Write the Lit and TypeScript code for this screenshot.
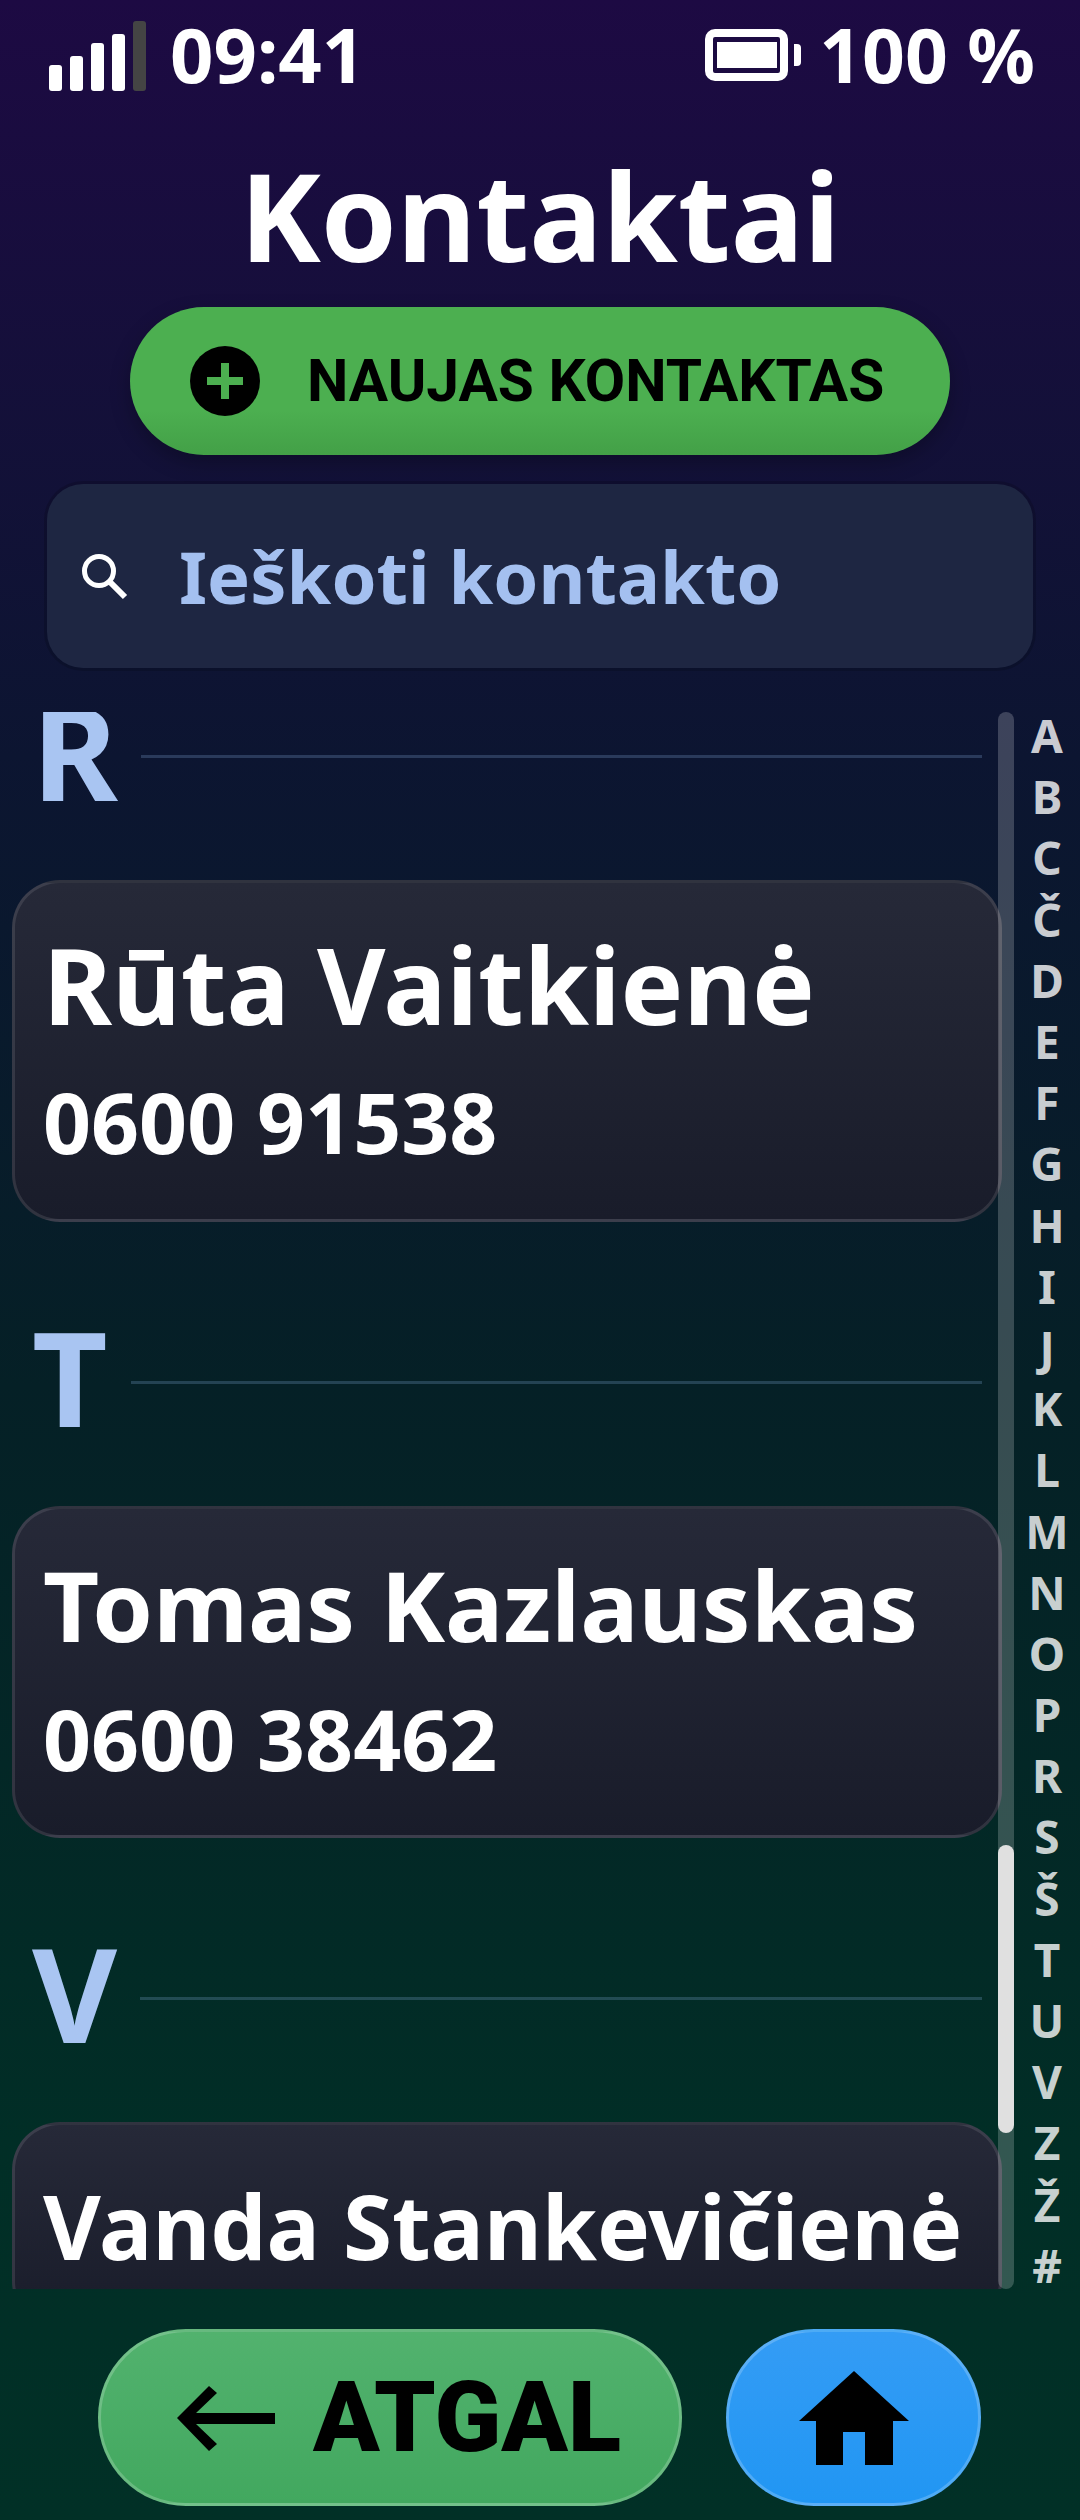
import { LitElement, html, css, svg, nothing } from 'lit';
import { customElement } from 'lit/decorators.js';

// name size differs per card, the reference is not uniform here.
// The last card runs under the nav, its phone line is never seen.
const SECTIONS = [
  { letter: 'R', name: 'Rūta Vaitkienė', phone: '0600 91538', size: 'lg' },
  { letter: 'T', name: 'Tomas Kazlauskas', phone: '0600 38462', size: 'md' },
  { letter: 'V', name: 'Vanda Stankevičienė', phone: '', size: 'sm' },
];

const INDEX = 'A B C Č D E F G H I J K L M N O P R S Š T U V Z Ž #'.split(' ');

const BARS = [
  { x: 0, h: 26 },
  { x: 21, h: 35 },
  { x: 42, h: 48 },
  { x: 63, h: 57 },
];

@customElement('app-root')
export class AppRoot extends LitElement {
  static styles = css`
    :host {
      display: block;
      width: 1080px;
      height: 2520px;
      font-family: "Noto Sans", sans-serif;
      color: #fff;
    }

    .screen {
      height: 2520px;
      display: flex;
      flex-direction: column;
      background: linear-gradient(180deg, #1d0a43 0%, #0c1531 30%, #052026 55%, #012e26 85%, #013026 100%);
    }

    .status {
      display: flex;
      justify-content: space-between;
      padding: 16px 45px 0 49px;
      font-size: 76px;
      line-height: 76px;
      font-weight: 700;
    }

    .status-side {
      display: flex;
      align-items: flex-start;
    }

    .signal {
      width: 97px;
      height: 70px;
      margin: 5px 24px 0 0;
    }

    .battery {
      width: 96px;
      height: 52px;
      margin: 13px 18px 0 0;
    }

    .pct {
      font-size: 75px;
    }

    h1 {
      margin: 62px 0 0;
      text-align: center;
      font-size: 122px;
      line-height: 122px;
      font-weight: 700;
    }

    .new {
      align-self: center;
      width: 820px;
      height: 148px;
      margin-top: 31px;
      box-sizing: border-box;
      padding-left: 60px;
      display: flex;
      align-items: center;
      gap: 47px;
      border-radius: 74px;
      background: linear-gradient(180deg, #4caf50 0%, #4caf50 70%, #43a047 100%);
      box-shadow: 0 8px 20px rgba(0, 0, 0, 0.25);
      color: #000;
      font-family: Roboto, sans-serif;
      font-size: 58.6px;
      font-weight: 700;
    }

    .new svg {
      width: 70px;
      height: 70px;
    }

    .search {
      height: 184px;
      margin: 29px 47px 0;
      padding-left: 34px;
      display: flex;
      align-items: center;
      gap: 51px;
      border-radius: 36px;
      background: #1e2642;
      box-shadow: 0 0 0 3px rgba(0, 0, 0, 0.15);
      color: #a4c0f0;
      font-size: 72.3px;
      font-weight: 700;
    }

    .search svg {
      width: 47px;
      height: 47px;
    }

    .body {
      position: relative;
      height: 1577px;
      margin-top: 44px;
      padding-left: 12px;
      display: flex;
    }

    .list {
      width: 990px;
      overflow: hidden;
    }

    /* list is scrolled a little, the first letter is cut at the top */
    .list-inner {
      margin-top: -40px;
    }

    .header {
      display: flex;
      align-items: center;
      gap: 23px;
      padding: 0 20px;
      margin: 75.5px 0 51px;
      color: #a9c5f2;
      font-size: 131px;
      line-height: 157px;
      font-weight: 700;
    }

    .section:first-child .header {
      margin-top: 0;
    }

    .rule {
      flex: 1;
      height: 3px;
      margin-top: 12px;
      background: rgba(130, 170, 220, 0.25);
    }

    .card {
      padding: 38px 20px 46px 28px;
      border: 3px solid rgba(255, 255, 255, 0.1);
      border-radius: 48px;
      background: linear-gradient(180deg, #262938 0%, #191c2a 100%);
    }

    .name {
      font-weight: 700;
      line-height: 1.2;
      white-space: nowrap;
    }

    .name.lg {
      font-size: 105.4px;
    }

    .name.md {
      font-size: 97.3px;
    }

    .name.sm {
      margin-top: 10px;
      font-size: 89px;
    }

    .phone {
      margin-top: 25px;
      font-size: 84px;
      line-height: 1.2;
      font-weight: 700;
    }

    .track {
      position: absolute;
      left: 998px;
      top: 0;
      bottom: 0;
      width: 16px;
      border-radius: 8px;
      background: rgba(255, 255, 255, 0.2);
    }

    .thumb {
      position: absolute;
      left: 0;
      right: 0;
      top: 1133px;
      height: 288px;
      border-radius: 8px;
      background: #e0e0e0;
    }

    .index {
      width: 66px;
      margin-left: 12px;
      display: flex;
      flex-direction: column;
      justify-content: center;
      align-items: center;
      color: rgba(255, 255, 255, 0.8);
      font-size: 46px;
      font-weight: 700;
    }

    .index span {
      flex: none;
      height: 61.2px;
      line-height: 61.2px;
    }

    .nav {
      display: flex;
      gap: 44px;
      padding-left: 98px;
      margin-top: 40px;
    }

    .nav-btn {
      height: 177px;
      box-sizing: border-box;
      display: flex;
      align-items: center;
      border: 3px solid rgba(255, 255, 255, 0.2);
      border-radius: 88px;
      color: #000;
    }

    .back {
      width: 584px;
      padding-left: 75px;
      gap: 37px;
      background: linear-gradient(180deg, #52b26e 0%, #42a85f 100%);
      font-family: Roboto, sans-serif;
      font-size: 98px;
      font-weight: 900;
    }

    .home {
      width: 255px;
      justify-content: center;
      background: linear-gradient(180deg, #349cf5 0%, #2196f3 100%);
    }

    .back svg {
      width: 100px;
      height: 66px;
    }

    .home svg {
      width: 110px;
      height: 94px;
    }
  `;

  renderSection(s: typeof SECTIONS[number]) {
    return html`
      <div class="section">
        <div class="header">
          <span>${s.letter}</span>
          <div class="rule"></div>
        </div>
        <div class="card">
          <div class="name ${s.size}">${s.name}</div>
          ${s.phone ? html`<div class="phone">${s.phone}</div>` : nothing}
        </div>
      </div>
    `;
  }

  render() {
    return html`
      <div class="screen">
        <div class="status">
          <div class="status-side">
            <svg class="signal" viewBox="0 0 97 70">
              ${BARS.map(b => svg`<rect x=${b.x} y=${70 - b.h} width="13" height=${b.h} rx="3" fill="#fff"></rect>`)}
              <rect x="84" y="0" width="13" height="70" rx="3" fill="#444"></rect>
            </svg>
            <span>09:41</span>
          </div>
          <div class="status-side">
            <svg class="battery" viewBox="0 0 96 52">
              <rect x="4" y="4" width="75" height="44" rx="6" fill="none" stroke="#fff" stroke-width="8"></rect>
              <rect x="12" y="13" width="60" height="26" fill="#fff"></rect>
              <path d="M89 15h3a4 4 0 0 1 4 4v14a4 4 0 0 1-4 4h-3z" fill="#fff"></path>
            </svg>
            <span class="pct">100 %</span>
          </div>
        </div>

        <h1>Kontaktai</h1>

        <div class="new">
          <svg viewBox="0 0 70 70">
            <circle cx="35" cy="35" r="35" fill="#000"></circle>
            <path d="M31 17h8v14h14v8H39v14h-8V39H17v-8h14z" fill="#4caf50"></path>
          </svg>
          <span>NAUJAS KONTAKTAS</span>
        </div>

        <div class="search">
          <svg viewBox="0 0 47 47">
            <circle cx="18" cy="18" r="14.5" fill="none" stroke="#fff" stroke-width="5"></circle>
            <path d="M28.5 28.5L44 44" fill="none" stroke="#fff" stroke-width="6"></path>
          </svg>
          <span>Ieškoti kontakto</span>
        </div>

        <div class="body">
          <div class="list">
            <div class="list-inner">
              ${SECTIONS.map(s => this.renderSection(s))}
            </div>
          </div>
          <div class="track"><div class="thumb"></div></div>
          <div class="index">
            ${INDEX.map(l => html`<span>${l}</span>`)}
          </div>
        </div>

        <div class="nav">
          <div class="nav-btn back">
            <svg viewBox="0 0 100 66">
              <path d="M1 33L33 1l8 7-21 20h79v11H20l21 20-8 7z" fill="#000"></path>
            </svg>
            <span>ATGAL</span>
          </div>
          <div class="nav-btn home">
            <svg viewBox="0 0 110 94">
              <path d="M55 0L110 50H94V94H66V61H44V94H17V50H0z" fill="#000"></path>
            </svg>
          </div>
        </div>
      </div>
    `;
  }
}
